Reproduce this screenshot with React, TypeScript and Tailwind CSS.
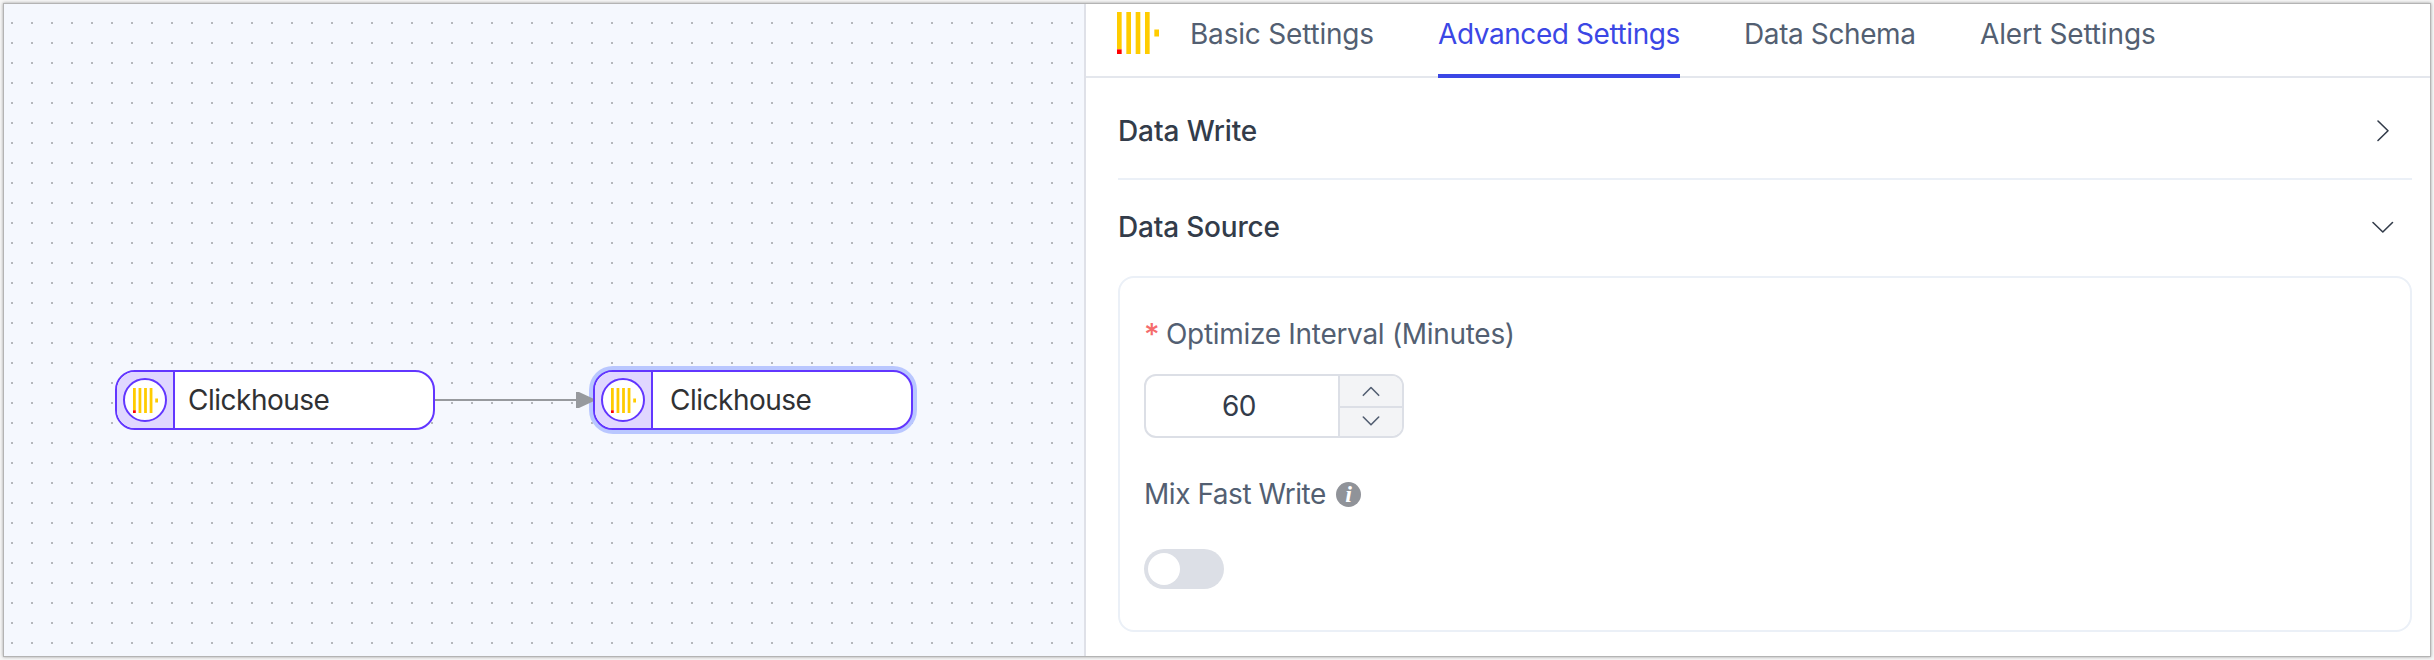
import React from 'react';

interface FlowNodeProps {
  label: string;
  selected?: boolean;
}

const tabs = [
  { label: 'Basic Settings', style: 'w-[184px] tracking-[-0.2px]' },
  { label: 'Advanced Settings', style: 'w-[242px] tracking-[-0.42px]', active: true },
  { label: 'Data Schema', style: 'w-[172px] tracking-[-0.4px]' },
  { label: 'Alert Settings', style: 'w-[176px] tracking-[-0.15px]' },
];

const ClickhouseIcon: React.FC<{ className?: string }> = ({ className }) => (
  <svg viewBox="0 0 9 9" className={className}>
    <path fill="#ffcc00" d="M0 0h1v8H0zM2 0h1v9H2zM4 0h1v9H4zM6 0h1v9H6zM8 3.75h1v1.5H8z" />
    <path fill="#ff0000" d="M0 8h1v1H0z" />
  </svg>
);

const Chevron: React.FC<{ d: string; className?: string }> = ({ d, className }) => (
  <svg viewBox="0 0 24 24" fill="none" stroke="currentColor" strokeWidth="1.6" strokeLinecap="round" strokeLinejoin="round" className={className}>
    <path d={d} />
  </svg>
);

const FlowNode: React.FC<FlowNodeProps> = ({ label, selected }) => (
  <div className={`flex w-[320px] h-[60px] rounded-[20px] border-2 border-[#6236ff] bg-white overflow-hidden ${selected ? 'ring-4 ring-[#b9c7ff]' : ''}`}>
    <div className="flex items-center justify-center w-[58px] shrink-0 bg-[#e0d7ff] border-r-2 border-[#6236ff]">
      <div className="flex items-center justify-center w-11 h-11 rounded-full bg-white border-2 border-[#6236ff]">
        <ClickhouseIcon className="w-[25px] h-[25px]" />
      </div>
    </div>
    <div className={`flex items-center text-[28px] tracking-[-0.5px] text-[#303133] ${selected ? 'pl-[17px]' : 'pl-[13px]'}`}>{label}</div>
  </div>
);

const App: React.FC = () => {
  return (
    <div className="w-[2434px] h-[660px] p-[3px] bg-[#f6f6f6] font-['Inter',sans-serif] overflow-hidden">
      <div className="flex h-[654px] border border-[#b4b4b4] bg-white overflow-hidden shadow-[0_0_3px_rgba(0,0,0,0.35)]">
        <div className="relative w-[1080px] shrink-0 bg-[#f5f8fe]">
          <svg className="absolute inset-0 w-full h-full">
            <defs>
              <pattern id="dots" x="7" y="18" width="20" height="20" patternUnits="userSpaceOnUse">
                <rect width="2" height="2" fill="#b5b8bd" />
              </pattern>
            </defs>
            <rect width="100%" height="100%" fill="url(#dots)" />
          </svg>
          <div className="absolute left-[111px] top-[366px]">
            <FlowNode label="Clickhouse" />
          </div>
          <div className="absolute left-[589px] top-[366px]">
            <FlowNode label="Clickhouse" selected />
          </div>
          <svg className="absolute left-[431px] top-[388px] w-[158px] h-4" viewBox="0 0 158 16">
            <path d="M0 8h144" stroke="#979a9e" strokeWidth="2" />
            <path d="M141 0h3l14 6.5v3L144 16h-3z" fill="#979a9e" />
          </svg>
        </div>

        <div className="flex-1 border-l-2 border-[#dfe1e8] bg-white">
          <div className="flex h-[74px] pl-[31px] border-b-2 border-[#e4e7ed]">
            <ClickhouseIcon className="w-[42px] h-[42px] mt-2 mr-[31px]" />
            <div className="flex gap-16">
              {tabs.map((tab) => (
                <div
                  key={tab.label}
                  className={`h-[74px] pt-1.5 text-[28px] leading-[48px] whitespace-nowrap ${tab.style} ${tab.active ? 'text-[#3b47e5] border-b-4 border-[#3b47e5]' : 'text-[#535f72]'}`}
                >
                  {tab.label}
                </div>
              ))}
            </div>
          </div>

          <div className="pl-8 pr-[18px]">
            <div className="flex items-center justify-between h-[102px] pt-1.5 pr-[17px] border-b-2 border-[#ebf0f7] text-[28px] font-medium tracking-[-0.1px] text-[#333c4a]">
              Data Write
              <Chevron d="M7 2l10 9.8-10 9.7" className="w-6 h-6" />
            </div>
            <div className="flex items-center justify-between h-24 pb-0.5 pr-[17px] text-[28px] font-medium tracking-[-0.2px] text-[#333c4a]">
              Data Source
              <Chevron d="M2 7.5l9.8 9.5 9.7-9.5" className="w-6 h-6" />
            </div>
            <div className="h-[356px] border-2 border-[#ebf0f7] rounded-2xl pl-6 pt-[34px]">
              <div className="flex h-11 leading-[44px] text-[28px] tracking-[-0.3px] text-[#535f72]">
                <span className="w-[22px] text-[#f56c6c] text-[30px] font-medium">*</span>
                Optimize Interval (Minutes)
              </div>
              <div className="flex w-[260px] h-16 mt-[18px] border-2 border-[#dcdfe6] rounded-xl overflow-hidden">
                <div className="flex items-center justify-center w-[192px] pr-1.5 text-[28px] tracking-[-0.4px] text-[#333c4a]">60</div>
                <div className="flex flex-col flex-1 border-l-2 border-[#dcdfe6] bg-[#f3f4f6] text-[#535f72]">
                  <div className="flex items-center justify-center h-8 border-b-2 border-[#dcdfe6]">
                    <Chevron d="M4.3 16.3l7.7-7.8 7.7 7.8" className="w-6 h-6" />
                  </div>
                  <div className="flex items-center justify-center h-7">
                    <Chevron d="M4.3 7l7.7 7.8L19.7 7" className="w-6 h-6" />
                  </div>
                </div>
              </div>
              <div className="flex items-center gap-2.5 mt-[34px] h-11 text-[28px] tracking-[-0.45px] text-[#535f72]">
                Mix Fast Write
                <span className="flex items-center justify-center w-[25px] h-[25px] rounded-full bg-[#909399] text-white text-[24px] leading-none italic font-bold font-['Liberation_Serif',serif]">i</span>
              </div>
              <div className="w-20 h-10 mt-[33px] p-1 rounded-full bg-[#dcdfe6]">
                <div className="w-8 h-8 rounded-full bg-white"></div>
              </div>
            </div>
          </div>
        </div>
      </div>
    </div>
  );
};

export default App;
